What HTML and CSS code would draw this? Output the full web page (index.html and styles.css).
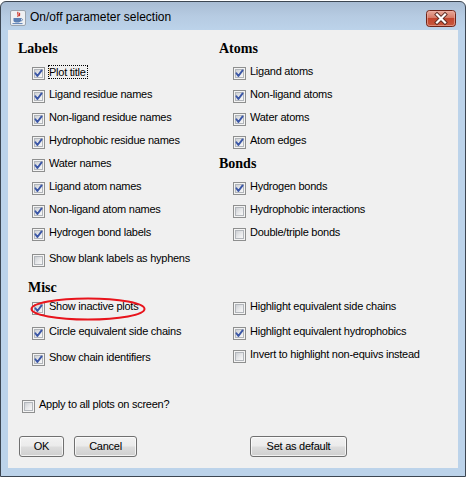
FILE: index.html
```html
<!DOCTYPE html>
<html>
<head>
<meta charset="utf-8">
<link rel="stylesheet" href="styles.css">
</head>
<body>
<div class="window">
  <div class="titlebar">
    <svg class="appicon" width="16" height="16" viewBox="0 0 16 16">
      <rect x="0.5" y="0.5" width="15" height="15" rx="1.5" fill="#eef0f3" stroke="#9aa3ad"/>
      <path d="M8.2 1.8 C6.4 3.6 9.6 4.6 7.6 6.8 M9.8 2.8 C8.8 4 10.4 4.6 9.2 6" stroke="#d0362a" stroke-width="1.2" fill="none"/>
      <path d="M3.5 8 H11 V10.5 C11 12 9.5 12.6 7.2 12.6 C5 12.6 3.5 12 3.5 10.5 Z" fill="#5b7fb3"/>
      <path d="M11 8.6 C13 8.6 13 10.8 11 10.8" stroke="#5b7fb3" stroke-width="1" fill="none"/>
      <path d="M2.5 13.6 H12.5" stroke="#5b7fb3" stroke-width="1"/>
    </svg>
    <span class="title">On/off parameter selection</span>
    <svg class="close" width="30" height="17" viewBox="0 0 30 17">
      <defs>
        <linearGradient id="cg" x1="0" y1="0" x2="0" y2="1">
          <stop offset="0" stop-color="#e9ab9c"/>
          <stop offset="0.45" stop-color="#d67b68"/>
          <stop offset="0.5" stop-color="#c2452e"/>
          <stop offset="1" stop-color="#c85a40"/>
        </linearGradient>
      </defs>
      <rect x="0.5" y="0.5" width="29" height="16" rx="3" fill="url(#cg)" stroke="#6f2418"/>
      <rect x="1.5" y="1.5" width="27" height="14" rx="2" fill="none" stroke="#efb3a6" stroke-opacity="0.6"/>
      <path d="M11 4.5 L19 12.5 M19 4.5 L11 12.5" stroke="#5a2a22" stroke-width="4" stroke-linecap="square"/>
      <path d="M11 4.5 L19 12.5 M19 4.5 L11 12.5" stroke="#ffffff" stroke-width="2.2" stroke-linecap="square"/>
    </svg>
  </div>
  <div class="content">
    <div class="grid top">
      <div class="col">
        <div class="head">Labels</div>
        <div class="cb"><span class="box on"><svg viewBox="0 0 13 13"><path d="M3.4 6.2 L5.4 9 L9.6 3.4"/></svg></span><span class="txt focus">Plot title</span></div>
        <div class="cb"><span class="box on"><svg viewBox="0 0 13 13"><path d="M3.4 6.2 L5.4 9 L9.6 3.4"/></svg></span><span class="txt">Ligand residue names</span></div>
        <div class="cb"><span class="box on"><svg viewBox="0 0 13 13"><path d="M3.4 6.2 L5.4 9 L9.6 3.4"/></svg></span><span class="txt">Non-ligand residue names</span></div>
        <div class="cb"><span class="box on"><svg viewBox="0 0 13 13"><path d="M3.4 6.2 L5.4 9 L9.6 3.4"/></svg></span><span class="txt">Hydrophobic residue names</span></div>
        <div class="cb"><span class="box on"><svg viewBox="0 0 13 13"><path d="M3.4 6.2 L5.4 9 L9.6 3.4"/></svg></span><span class="txt">Water names</span></div>
        <div class="cb"><span class="box on"><svg viewBox="0 0 13 13"><path d="M3.4 6.2 L5.4 9 L9.6 3.4"/></svg></span><span class="txt">Ligand atom names</span></div>
        <div class="cb"><span class="box on"><svg viewBox="0 0 13 13"><path d="M3.4 6.2 L5.4 9 L9.6 3.4"/></svg></span><span class="txt">Non-ligand atom names</span></div>
        <div class="cb"><span class="box on"><svg viewBox="0 0 13 13"><path d="M3.4 6.2 L5.4 9 L9.6 3.4"/></svg></span><span class="txt">Hydrogen bond labels</span></div>
        <div class="cb extra"><span class="box"></span><span class="txt">Show blank labels as hyphens</span></div>
      </div>
      <div class="col">
        <div class="head">Atoms</div>
        <div class="cb"><span class="box on"><svg viewBox="0 0 13 13"><path d="M3.4 6.2 L5.4 9 L9.6 3.4"/></svg></span><span class="txt">Ligand atoms</span></div>
        <div class="cb"><span class="box on"><svg viewBox="0 0 13 13"><path d="M3.4 6.2 L5.4 9 L9.6 3.4"/></svg></span><span class="txt">Non-ligand atoms</span></div>
        <div class="cb"><span class="box on"><svg viewBox="0 0 13 13"><path d="M3.4 6.2 L5.4 9 L9.6 3.4"/></svg></span><span class="txt">Water atoms</span></div>
        <div class="cb"><span class="box on"><svg viewBox="0 0 13 13"><path d="M3.4 6.2 L5.4 9 L9.6 3.4"/></svg></span><span class="txt">Atom edges</span></div>
        <div class="head">Bonds</div>
        <div class="cb"><span class="box on"><svg viewBox="0 0 13 13"><path d="M3.4 6.2 L5.4 9 L9.6 3.4"/></svg></span><span class="txt">Hydrogen bonds</span></div>
        <div class="cb"><span class="box"></span><span class="txt">Hydrophobic interactions</span></div>
        <div class="cb"><span class="box"></span><span class="txt">Double/triple bonds</span></div>
      </div>
    </div>
    <div class="head misc-head">Misc</div>
    <div class="grid misc">
      <div class="col">
        <div class="cb r25"><span class="box on"><svg viewBox="0 0 13 13"><path d="M3.4 6.2 L5.4 9 L9.6 3.4"/></svg></span><span class="txt">Show inactive plots</span></div>
        <div class="cb r26"><span class="box on"><svg viewBox="0 0 13 13"><path d="M3.4 6.2 L5.4 9 L9.6 3.4"/></svg></span><span class="txt">Circle equivalent side chains</span></div>
        <div class="cb"><span class="box on"><svg viewBox="0 0 13 13"><path d="M3.4 6.2 L5.4 9 L9.6 3.4"/></svg></span><span class="txt">Show chain identifiers</span></div>
      </div>
      <div class="col">
        <div class="cb r25"><span class="box"></span><span class="txt">Highlight equivalent side chains</span></div>
        <div class="cb"><span class="box on"><svg viewBox="0 0 13 13"><path d="M3.4 6.2 L5.4 9 L9.6 3.4"/></svg></span><span class="txt">Highlight equivalent hydrophobics</span></div>
        <div class="cb"><span class="box"></span><span class="txt">Invert to highlight non-equivs instead</span></div>
      </div>
    </div>
    <div class="apply">
      <div class="cb"><span class="box"></span><span class="txt">Apply to all plots on screen?</span></div>
    </div>
    <div class="buttons">
      <div class="btn ok">OK</div>
      <div class="btn cancel">Cancel</div>
      <div class="btn def">Set as default</div>
    </div>
    <svg class="ring" width="116" height="24" viewBox="0 0 116 24">
      <ellipse cx="58" cy="12" rx="56.5" ry="10.5" fill="none" stroke="#e8141c" stroke-width="2"/>
    </svg>
  </div>
</div>
</body>
</html>
```

FILE: styles.css
```css
* { box-sizing: border-box; }
html, body { margin: 0; padding: 0; background: #ffffff; }
body { width: 466px; height: 477px; overflow: hidden; }

.window {
  margin-top: 1px;
  width: 466px;
  height: 476px;
  border: 1px solid #3c4652;
  border-radius: 6px 6px 0 0;
  background: linear-gradient(to bottom, #a9bdd4 0px, #b6cbe2 14px, #bcd3ea 28px, #bcd3ea 100%);
  padding: 0 7px 7px 7px;
  display: flex;
  flex-direction: column;
}

.titlebar {
  height: 28px;
  display: flex;
  align-items: flex-start;
  padding-top: 8px;
  margin: 0 -7px;
  padding-left: 9px;
  padding-right: 9px;
}
.appicon { flex: none; display: block; }
.title {
  margin-left: 4px;
  font-family: "Liberation Sans", Arial, sans-serif;
  font-size: 12px;
  line-height: 18px;
  margin-top: -2px;
  color: #000;
  flex: 1;
}
.close { flex: none; display: block; margin-top: 0; }

.content {
  position: relative;
  height: 438px;
  background: #f0f0f0;
  font-family: "Liberation Sans", Arial, sans-serif;
  font-size: 11px;
  letter-spacing: -0.25px;
  color: #000;
}

.grid {
  display: grid;
  grid-template-columns: 201px 1fr;
  padding-left: 10px;
}
.top { padding-top: 9px; }

.col { display: flex; flex-direction: column; }

.head {
  height: 23px;
  line-height: 19px;
  font-family: "Liberation Serif", "Times New Roman", serif;
  font-weight: bold;
  font-size: 14px;
  letter-spacing: 0;
}
.misc-head {
  margin-top: 6px;
  margin-left: 20px;
  height: 19px;
}

.cb {
  height: 23px;
  display: flex;
  align-items: flex-start;
  padding-left: 14px;
  white-space: nowrap;
}
.cb.extra { margin-top: 3px; }
.cb.r25 { height: 25px; }
.cb.r26 { height: 26px; }

.box {
  flex: none;
  width: 13px;
  height: 13px;
  margin-top: 5px;
  margin-right: 4px;
  border: 1px solid #8e8f8f;
  background: #f4f4f4;
  padding: 1px;
  position: relative;
}
.box::before {
  content: "";
  position: absolute;
  left: 1px; top: 1px; right: 1px; bottom: 1px;
  border: 1px solid #b2b6bb;
  background: linear-gradient(135deg, #cdd0d4 0%, #e6e7e9 50%, #f8f8f8 100%);
}
.box svg {
  position: absolute;
  left: -1px; top: -1px;
  width: 13px; height: 13px;
  display: block;
}
.box svg path {
  fill: none;
  stroke: #3a56a6;
  stroke-width: 1.9;
  stroke-linecap: round;
  stroke-linejoin: round;
}

.txt {
  line-height: 19px;
}
.txt.focus {
  display: inline-block;
  line-height: 12px;
  margin-top: 3px;
  height: 14px;
  border: 1px dotted #000;
  padding: 0 1px 0 0;
  margin-left: -1px;
}

.apply {
  margin-top: 24px;
}
.apply .cb { padding-left: 14px; }

.buttons {
  margin-top: 18px;
  padding-left: 11px;
  display: flex;
}
.btn {
  height: 21px;
  border: 1px solid #707070;
  border-radius: 3px;
  background: linear-gradient(to bottom, #f2f2f2 0%, #ebebeb 48%, #dddddd 52%, #cfcfcf 100%);
  box-shadow: inset 0 0 0 1px rgba(255,255,255,0.7);
  text-align: center;
  line-height: 18px;
}
.ok { width: 45px; }
.cancel { width: 63px; margin-left: 10px; }
.def { width: 97px; margin-left: 113px; }

.ring {
  position: absolute;
  left: 22px;
  top: 267px;
  display: block;
}
```
